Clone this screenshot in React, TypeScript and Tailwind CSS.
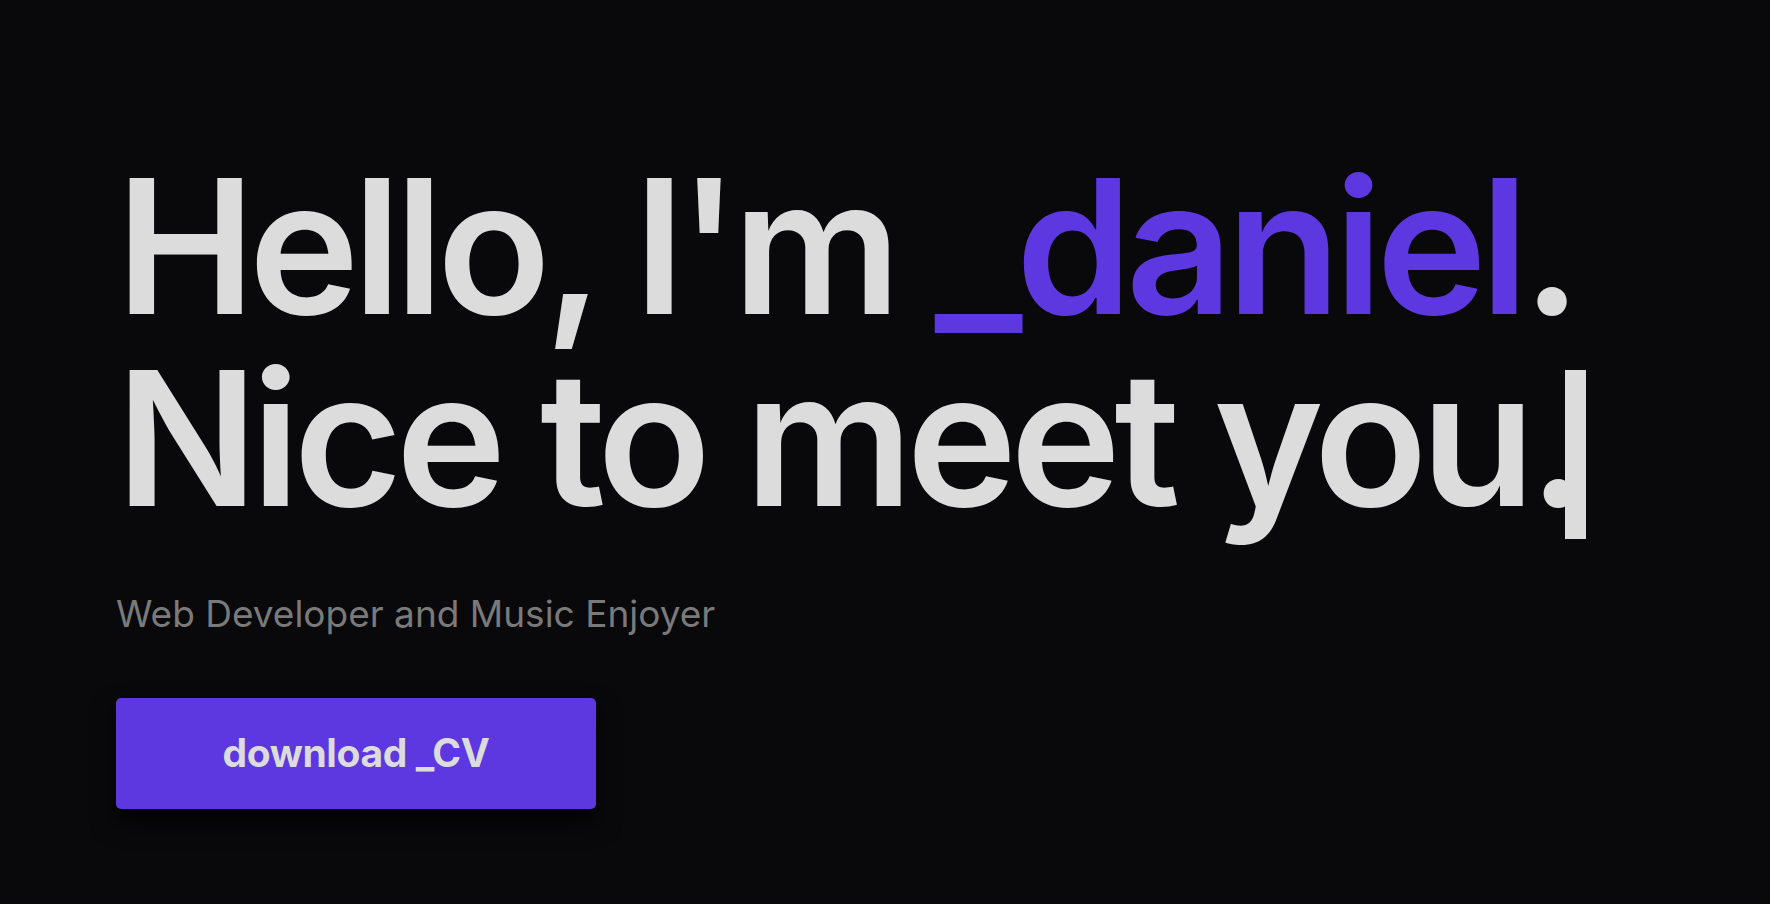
export default function App() {
  return (
    <div
      className="min-h-[904px] w-full bg-[#09090b] pl-[116px] pt-[150px]"
      style={{ fontFamily: 'Inter, "Liberation Sans", sans-serif' }}
    >
      <h1 className="text-[187px] leading-[192px] font-semibold tracking-[-0.036em] text-[#dcdcdc]">
        <span>Hello, I'm </span>
        <span className="text-[#5d38e0]">_daniel</span>
        <span>.</span>
        <br />
        <span>Nice to meet you.</span>
        <span className="ml-[-16px] inline-block h-[169px] w-[21px] bg-[#dcdcdc] align-[-33px]" />
      </h1>
      <p className="mt-[55px] text-[37px] leading-[40px] text-[#7a7a7a]">
        Web Developer and Music Enjoyer
      </p>
      <button className="mt-[64px] flex h-[111px] w-[480px] items-center justify-center rounded-[5px] bg-[#5d38e0] text-[39px] font-bold tracking-[-0.01em] text-[#dcdcdc] shadow-[0_12px_24px_rgba(0,0,0,0.85)]">
        download _CV
      </button>
    </div>
  );
}
